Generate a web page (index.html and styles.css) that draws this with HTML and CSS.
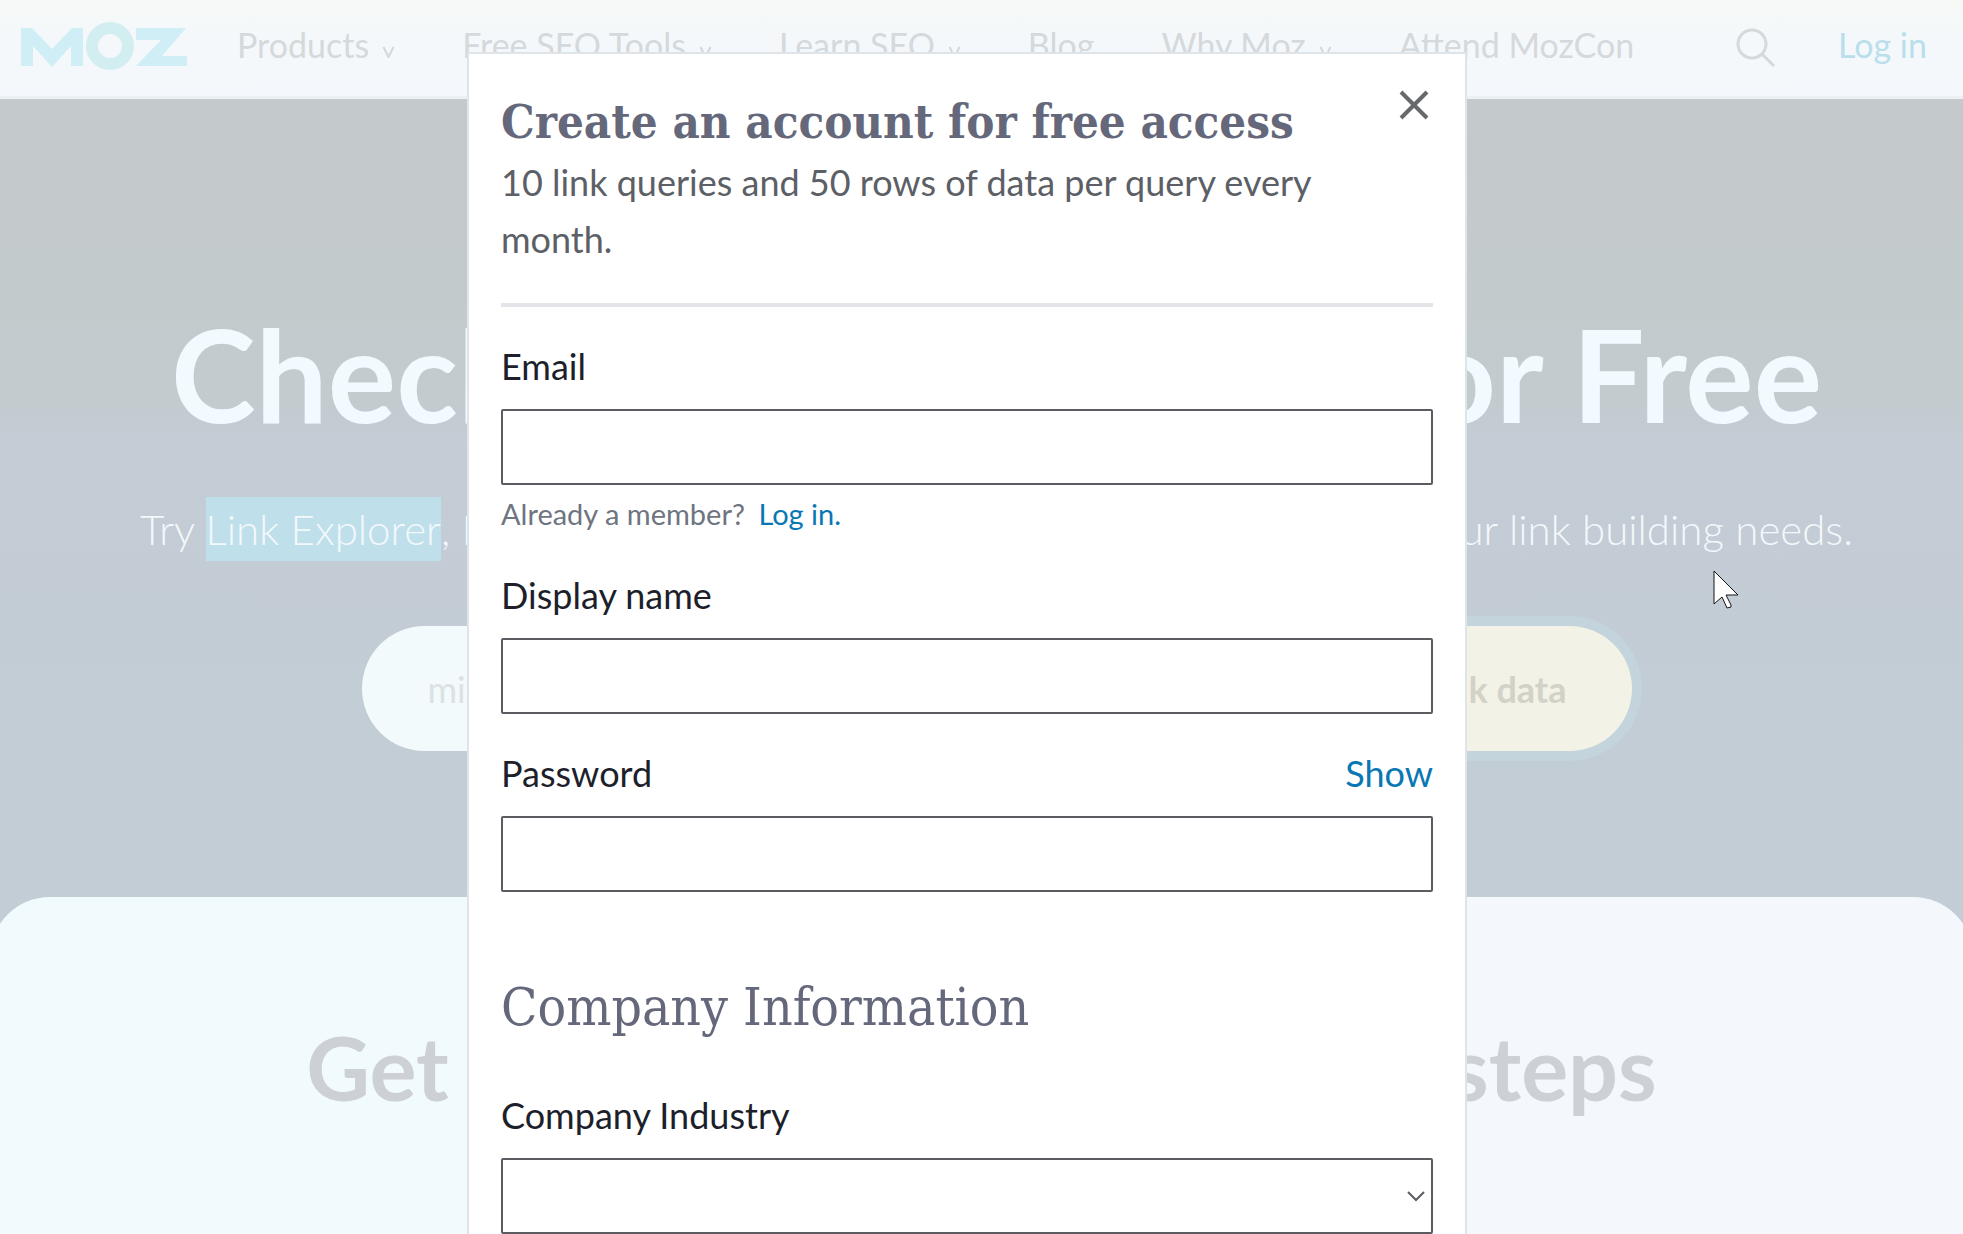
FILE: index.html
```html
<!DOCTYPE html>
<html lang="en">
<head>
<meta charset="utf-8">
<title>Check Backlinks for Free - Moz</title>
<link rel="stylesheet" href="styles.css">
</head>
<body>
<div class="page">
  <header class="site-header">
    <a class="logo" href="#" aria-label="Moz">
      <svg width="166" height="48" viewBox="0 0 166 48" aria-hidden="true">
        <path fill="#d0eef6" d="M0 6h11l20 21 20-21h11v38H50V24L31 45 12 24v20H0z"/>
        <path fill="#d0eef6" d="M115 6h50l-24 28h25v10h-51l25-26h-25z"/>
        <circle cx="89" cy="24" r="18" fill="none" stroke="#d2eef1" stroke-width="12"/>
      </svg>
    </a>
    <nav class="main-nav">
      <a href="#">Products <svg class="caret" viewBox="0 0 12 12"><path d="M1 1l5 10 5-10"/></svg></a>
      <a href="#">Free SEO Tools <svg class="caret" viewBox="0 0 12 12"><path d="M1 1l5 10 5-10"/></svg></a>
      <a href="#">Learn SEO <svg class="caret" viewBox="0 0 12 12"><path d="M1 1l5 10 5-10"/></svg></a>
      <a href="#">Blog</a>
      <a href="#">Why Moz <svg class="caret" viewBox="0 0 12 12"><path d="M1 1l5 10 5-10"/></svg></a>
      <a href="#">Attend MozCon</a>
    </nav>
    <button class="search-button" type="button" aria-label="Search">
      <svg width="40" height="40" viewBox="0 0 40 40"><circle cx="16" cy="16" r="14"/><path d="M26 26l12 12"/></svg>
    </button>
    <a class="login" href="#">Log in</a>
  </header>

  <main class="hero">
    <h1>Check Any Backlinks for Free</h1>
    <p class="lead">Try <mark>Link Explorer</mark>, Moz's powerful and fast backlink checker tool, for all your link building needs.</p>
    <form class="domain-search">
      <input type="text" aria-label="Domain" placeholder="mixpanel.com">
      <button type="button">Get free link data</button>
    </form>
  </main>

  <section class="steps">
    <h2>Get backlink data in 3 simple steps</h2>
  </section>
</div>

<div class="overlay">
  <section class="modal" role="dialog" aria-labelledby="modal-title">
    <button class="close" type="button" aria-label="Close">
      <svg width="30" height="30" viewBox="0 0 30 30"><path d="M2 2l26 26M28 2L2 28"/></svg>
    </button>
    <h2 id="modal-title" class="modal-title">Create an account for free access</h2>
    <p class="modal-intro">10 link queries and 50 rows of data per query every month.</p>
    <hr>
    <form class="signup">
      <div class="field">
        <label for="email">Email</label>
        <input id="email" type="email">
        <p class="hint">Already a member? <a href="#">Log in.</a></p>
      </div>
      <div class="field">
        <label for="name">Display name</label>
        <input id="name" type="text">
      </div>
      <div class="field">
        <div class="label-row">
          <label for="password">Password</label>
          <button class="show" type="button">Show</button>
        </div>
        <input id="password" type="password">
      </div>
      <h3>Company Information</h3>
      <div class="field">
        <label for="industry">Company Industry</label>
        <div class="select-wrap">
          <select id="industry"><option></option></select>
          <svg class="select-arrow" width="18" height="12" viewBox="0 0 18 12"><path d="M1 2l8 8 8-8"/></svg>
        </div>
      </div>
    </form>
  </section>
</div>

<svg class="pointer" width="27" height="40" viewBox="0 0 27 40" aria-hidden="true">
  <path d="M1 1v33l8-7 5 11 4-1v-2l-5-10h12z"/>
</svg>
</body>
</html>
```
FILE: styles.css
```css
* {
  box-sizing: border-box;
}

body {
  position: relative;
  height: 100vh;
  margin: 0;
  overflow: hidden;
  font-family: Lato, "Liberation Sans", sans-serif;
  font-size: 36px;
  color: #1d1f2b;
}

h1, h2, h3, p {
  margin: 0;
}

a {
  color: #0a77b5;
  text-decoration: none;
}

button {
  padding: 0;
  border: 0;
  background: none;
  font: inherit;
}

svg {
  display: block;
  fill: none;
}

.page {
  display: flex;
  flex-direction: column;
  height: 100%;
  overflow: hidden;
  background: linear-gradient(#c4c9cb 99px, #c2cbce 400px, #c4ccd5 440px, #c2cdd5 900px);
}

/* Header */

.site-header {
  display: flex;
  flex: none;
  align-items: center;
  height: 99px;
  padding: 0 36px 7px 21px;
  border-bottom: 3px solid #ecf2f4;
  background: linear-gradient(#f6f9f6, #f4f8fb 40px, #f4f8fc);
  font-size: 34px;
  line-height: 40px;
}

.logo {
  margin-top: 2px;
}

.main-nav {
  display: flex;
  gap: 67px;
  margin-left: 50px;
  white-space: nowrap;
}

.main-nav a {
  display: flex;
  align-items: center;
  gap: 13px;
  color: #d5d9db;
}

.caret {
  width: 13px;
  height: 12px;
  margin-top: 14px;
  stroke: #d3d7d9;
  stroke-width: 2;
}

.search-button {
  margin-top: 6px;
  margin-left: auto;
  stroke: #d5d9db;
  stroke-width: 3;
}

.login {
  margin-left: 62px;
  color: #b9dfec;
}

/* Hero */

.hero {
  flex: none;
  padding: 198px 0 146px 30px;
  text-align: center;
  white-space: nowrap;
}

h1 {
  color: #f1fafe;
  font-size: 128px;
  font-weight: 700;
  line-height: 154px;
}

.lead {
  margin-top: 46px;
  color: #f3f8fb;
  font-size: 42px;
  font-weight: 300;
  line-height: 64px;
}

.lead mark {
  display: inline-block;
  background: #bfdfeb;
  color: inherit;
}

.domain-search {
  display: flex;
  width: 1270px;
  max-width: 100%;
  height: 125px;
  margin: 65px auto 0;
  border-radius: 63px;
  background: #f2fafc;
}

.domain-search input {
  flex: 1;
  min-width: 0;
  padding: 0 66px;
  border: 0;
  background: none;
  font: inherit;
}

.domain-search input::placeholder {
  color: #dbe1e4;
}

.domain-search button {
  padding: 0 65px;
  border-radius: 63px;
  background: #f2f2e6;
  box-shadow: 0 0 0 10px #c3d4dc;
  color: #d2d2c8;
  font-weight: 700;
}

/* Steps */

.steps {
  flex: 1;
  margin: 0 -10px;
  padding-top: 118px;
  border-radius: 60px 60px 0 0;
  background: linear-gradient(90deg, #f1fafc 500px, #f4f8fc 1500px);
  text-align: center;
  white-space: nowrap;
}

.steps h2 {
  color: #cdd0d4;
  font-size: 88px;
  font-weight: 700;
  line-height: 104px;
}

/* Sign-up dialog */

.overlay {
  position: absolute;
  inset: 0;
  display: flex;
  justify-content: center;
  padding: 52px 29px 0 0;
}

.modal {
  position: relative;
  width: 1000px;
  padding: 36px 32px 0;
  border: 2px solid #dfe4e9;
  border-bottom: 0;
  background: #fff;
}

.close {
  position: absolute;
  top: 36px;
  right: 36px;
  stroke: #666a6c;
  stroke-width: 4;
}

.modal-title {
  color: #65687b;
  font-family: "Roboto Slab", "DejaVu Serif Condensed", "DejaVu Serif", serif;
  font-size: 47px;
  font-weight: 700;
  line-height: 64px;
  white-space: nowrap;
}

.modal-intro {
  padding-right: 90px;
  color: #5c6066;
  line-height: 57px;
}

hr {
  height: 4px;
  margin: 35px 0 37px;
  border: 0;
  background: #e4e5e9;
}

.signup {
  display: flex;
  flex-direction: column;
  gap: 37px;
}

.field {
  display: flex;
  flex-direction: column;
  gap: 21px;
  line-height: 44px;
}

.label-row {
  display: flex;
  justify-content: space-between;
}

.field input,
.field select {
  width: 100%;
  height: 76px;
  padding: 0 16px;
  border: 2px solid #5b5c61;
  border-radius: 2px;
  background: #fff;
  font: inherit;
}

.field select {
  display: block;
  appearance: none;
}

.select-wrap {
  position: relative;
}

.select-arrow {
  position: absolute;
  top: 32px;
  right: 8px;
  stroke: #5b5c61;
  stroke-width: 2;
  pointer-events: none;
}

.hint {
  margin: -12px 0 2px;
  color: #6e7480;
  font-size: 29px;
  line-height: 40px;
}

.hint a {
  margin-left: 6px;
}

.show {
  color: #0a77b5;
}

h3 {
  padding: 46px 0 17px;
  color: #65687b;
  font-family: "Roboto Slab", "DejaVu Serif Condensed", "DejaVu Serif", serif;
  font-size: 53px;
  font-weight: 300;
  line-height: 64px;
}

.pointer {
  position: absolute;
  top: 570px;
  left: 1713px;
  fill: #fff;
  stroke: #10141a;
  stroke-width: 1;
}
```
